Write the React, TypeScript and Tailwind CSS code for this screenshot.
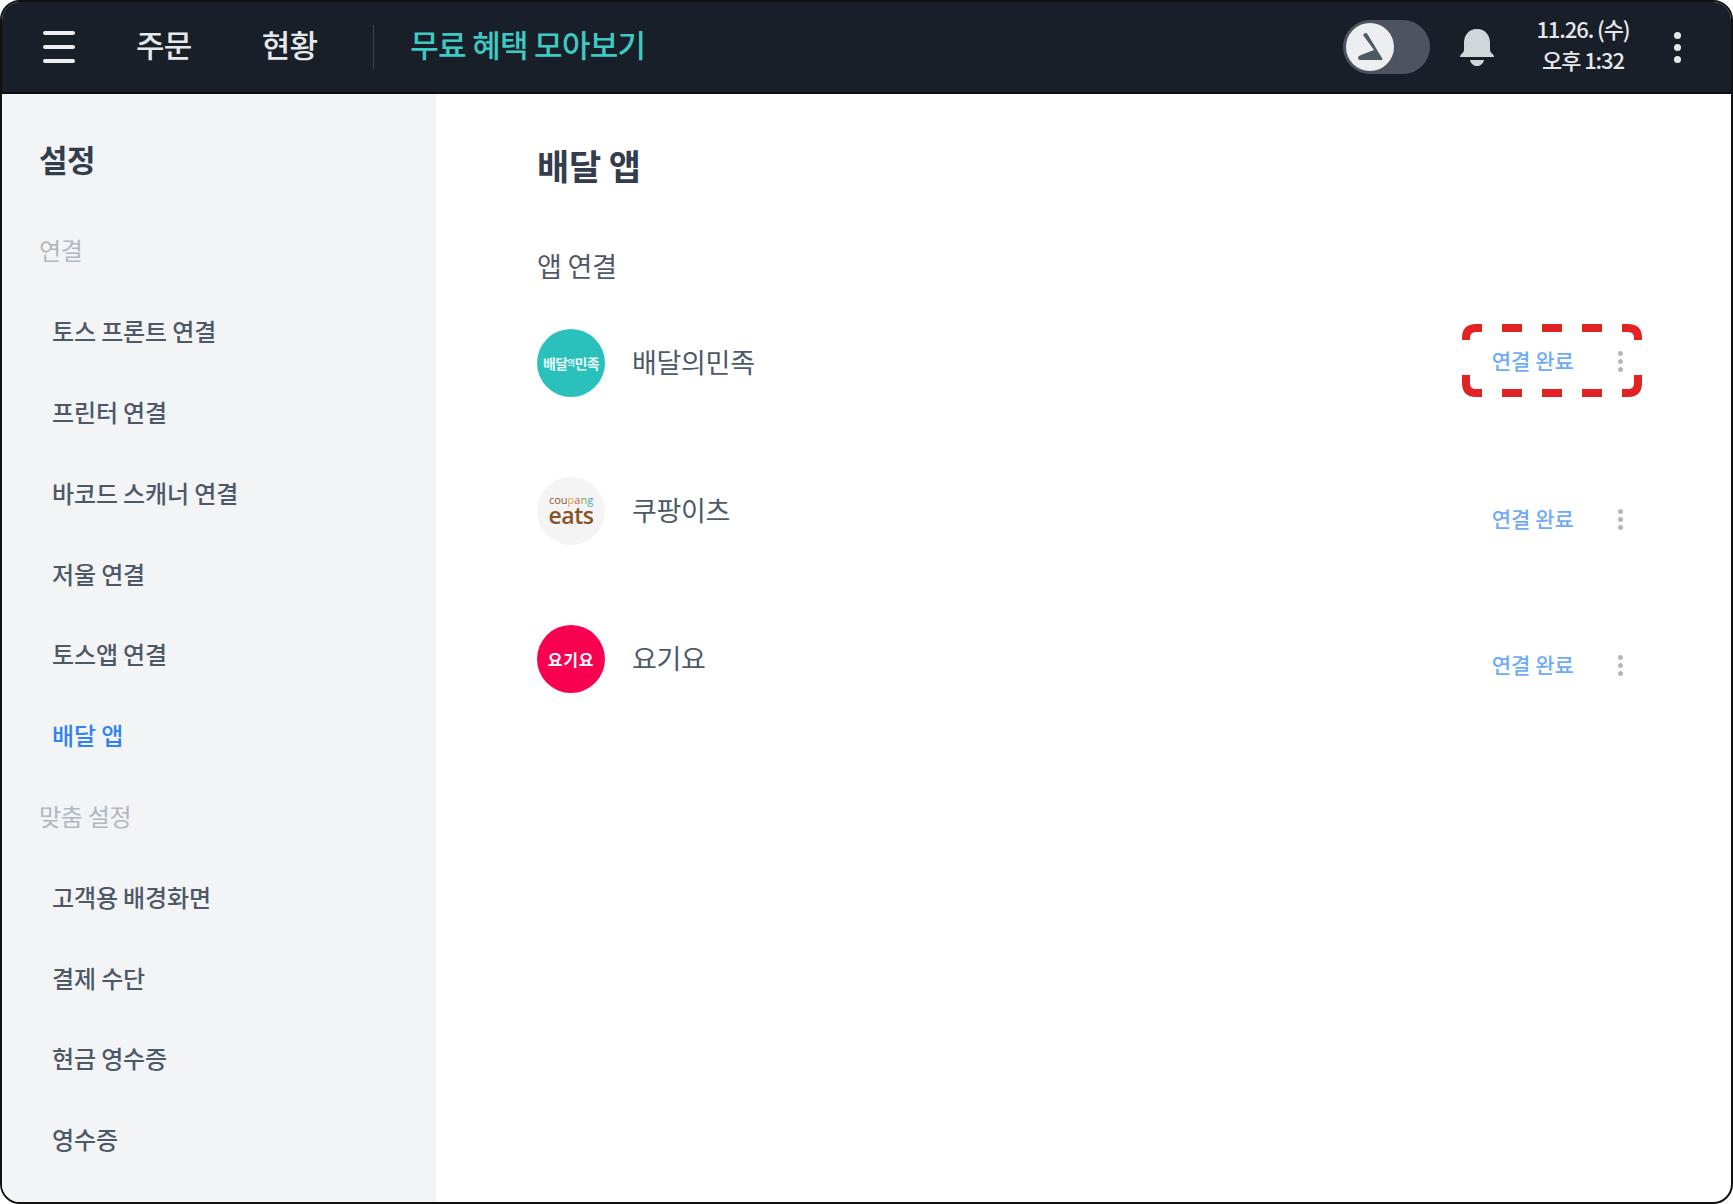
import React from "react";

const font = { fontFamily: '"Noto Sans CJK KR", "Noto Sans", sans-serif' };

function SideItem({ label, active }: { label: string; active?: boolean }) {
  return (
    <div className={`h-[80.8px] flex items-center pl-[50px] text-[24px] tracking-[-0.13px] font-medium ${active ? "text-[#3182f6]" : "text-[#4e5968]"}`}>
      {label}
    </div>
  );
}

function SideSection({ label }: { label: string }) {
  return <div className="h-[80.8px] flex items-center pl-[37px] text-[24px] tracking-[-0.3px] text-[#b0b8c1]">{label}</div>;
}

function Kebab({ cls, dot }: { cls: string; dot: string }) {
  return (
    <div className={`flex flex-col items-center ${cls}`}>
      <span className={`rounded-full ${dot}`} />
      <span className={`rounded-full ${dot}`} />
      <span className={`rounded-full ${dot}`} />
    </div>
  );
}

function AppRow({ name, logo, actionClass }: { name: string; logo: React.ReactNode; actionClass: string }) {
  return (
    <div className="h-[148px] flex items-center">
      {logo}
      <div className="ml-[27px] pb-[1px] text-[27px] tracking-[-0.3px] text-[#4e5968] flex-1">{name}</div>
      <div className={`flex items-center ${actionClass}`}>
        <span className="text-[21px] tracking-[0.05px] font-medium text-[#6fabf8]">연결 완료</span>
        <Kebab cls="ml-[44px] mr-[3px] gap-[3px]" dot="w-[5px] h-[5px] bg-[#b0b8c1]" />
      </div>
    </div>
  );
}

export default function App() {
  return (
    <div className="w-[1733px] h-[1204px] bg-white overflow-hidden" style={font}>
      <div className="relative w-full h-full rounded-[20px] border-2 border-[#111] overflow-hidden flex flex-col bg-white">
        <header className="h-[92px] shrink-0 bg-[#191f28] border-b-2 border-[#0b0e13] flex items-center text-[#e5e8eb]">
          <div className="ml-[41px] w-[32px] flex flex-col gap-[10px]">
            <span className="h-[4px] rounded-full bg-[#eceef0]" />
            <span className="h-[4px] rounded-full bg-[#eceef0]" />
            <span className="h-[4px] rounded-full bg-[#eceef0]" />
          </div>
          <div className="ml-[61px] pb-[6px] text-[31px] tracking-[-0.7px] font-medium">주문</div>
          <div className="ml-[70px] pb-[6px] text-[31px] tracking-[-0.7px] font-medium">현황</div>
          <div className="ml-[56px] w-px h-[44px] bg-[#3d444e]" />
          <div className="ml-[36px] pb-[6px] text-[31px] tracking-[-0.7px] font-medium text-[#3fc9c4]">무료 혜택 모아보기</div>
          <div className="flex-1" />
          <div className="w-[87px] h-[54px] rounded-full bg-[#4e5360] flex items-center pl-[3px]">
            <div className="w-[48px] h-[48px] rounded-full bg-[#eceef0]">
              <svg width="48" height="48" viewBox="0 0 48 48" fill="none">
                <path d="M17 12 Q18 10 20 10 Q21 10 22 12 L36 35 Q37 37 35 37 L14 37 Q12 37 12 35 Q12 33 15 32 L28 27 Z" fill="#4e5968" />
              </svg>
            </div>
          </div>
          <svg className="ml-[29px]" width="36" height="38" viewBox="0 0 36 38" fill="none">
            <path d="M18 1 C9 1 5 8 5 15 L5 22 C5 25 1 26 1 29 L35 29 C35 26 31 25 31 22 L31 15 C31 8 27 1 18 1 Z" fill="#d1d6db" />
            <path d="M11 32 L25 32 C24 36 21 38 18 38 C15 38 12 36 11 32 Z" fill="#d1d6db" />
          </svg>
          <div className="ml-[41px] pb-[6px] w-[94px] flex flex-col items-center text-[22px] leading-[31px] tracking-[-1.1px] text-[#e5e8eb] font-medium">
            <div className="whitespace-nowrap">11.26. (수)</div>
            <div className="whitespace-nowrap">오후 1:32</div>
          </div>
          <Kebab cls="ml-[44px] mr-[50px] gap-[5px]" dot="w-[7px] h-[7px] bg-[#e5e8eb]" />
        </header>
        <div className="flex-1 flex min-h-0">
          <aside className="w-[434px] shrink-0 bg-[#f2f4f6] pt-[36px]">
            <div className="h-[58px] flex items-center pl-[37px] text-[31px] font-bold tracking-[-0.4px] text-[#333d4b]">설정</div>
            <div className="h-[22px]" />
            <SideSection label="연결" />
            <SideItem label="토스 프론트 연결" />
            <SideItem label="프린터 연결" />
            <SideItem label="바코드 스캐너 연결" />
            <SideItem label="저울 연결" />
            <SideItem label="토스앱 연결" />
            <SideItem label="배달 앱" active />
            <SideSection label="맞춤 설정" />
            <SideItem label="고객용 배경화면" />
            <SideItem label="결제 수단" />
            <SideItem label="현금 영수증" />
            <SideItem label="영수증" />
          </aside>
          <main className="flex-1 pl-[101px] pr-[105px] pt-[41px]">
            <h1 className="text-[35px] font-bold tracking-[-0.2px] leading-[60px] text-[#333d4b]">배달 앱</h1>
            <div className="mt-[51px] text-[27px] tracking-[-0.2px] leading-[40px] text-[#4e5968]">앱 연결</div>
            <div className="mt-[3px]">
              <AppRow
                name="배달의민족"
                actionClass="-translate-y-[2px]"
                logo={
                  <div className="w-[68px] h-[68px] rounded-full bg-[#2ac1bc] flex items-center justify-center text-[#e8f8f7] text-[14px] font-bold tracking-[-0.6px] whitespace-nowrap">
                    배달<span className="text-[8px]">의</span>민족
                  </div>
                }
              />
              <AppRow
                name="쿠팡이츠"
                actionClass="translate-y-[8px]"
                logo={
                  <div className="w-[68px] h-[68px] rounded-full bg-[#f4f4f4] flex flex-col items-center justify-center pb-[3px]" style={{ fontFamily: '"Open Sans", sans-serif' }}>
                    <div className="text-[11px] leading-[11px] font-medium text-[#8a5a33]">
                      cou<span className="text-[#e8a33d]">p</span><span className="text-[#d9534f]">a</span><span className="text-[#6cb24a]">n</span><span className="text-[#4aa3df]">g</span>
                    </div>
                    <div className="text-[23px] leading-[21px] font-semibold text-[#8a5228] tracking-[-0.5px]">eats</div>
                  </div>
                }
              />
              <AppRow
                name="요기요"
                actionClass="translate-y-[6px]"
                logo={
                  <div className="w-[68px] h-[68px] rounded-full bg-[#fa0050] flex items-center justify-center text-white text-[16px] font-bold tracking-[0.8px]">요기요</div>
                }
              />
            </div>
          </main>
        </div>
        <svg className="absolute left-[1460px] top-[322px]" width="180" height="73" viewBox="0 0 180 73" fill="none" stroke="#e22323" strokeWidth="8">
          <path d="M4 16 V14 Q4 4 14 4 H20" />
          <path d="M160 4 H166 Q176 4 176 14 V16" />
          <path d="M4 51 V59 Q4 69 14 69 H20" />
          <path d="M160 69 H166 Q176 69 176 59 V51" />
          <path d="M40 4 H60 M80 4 H100 M120 4 H140" />
          <path d="M40 69 H60 M80 69 H100 M120 69 H140" />
        </svg>
      </div>
    </div>
  );
}
